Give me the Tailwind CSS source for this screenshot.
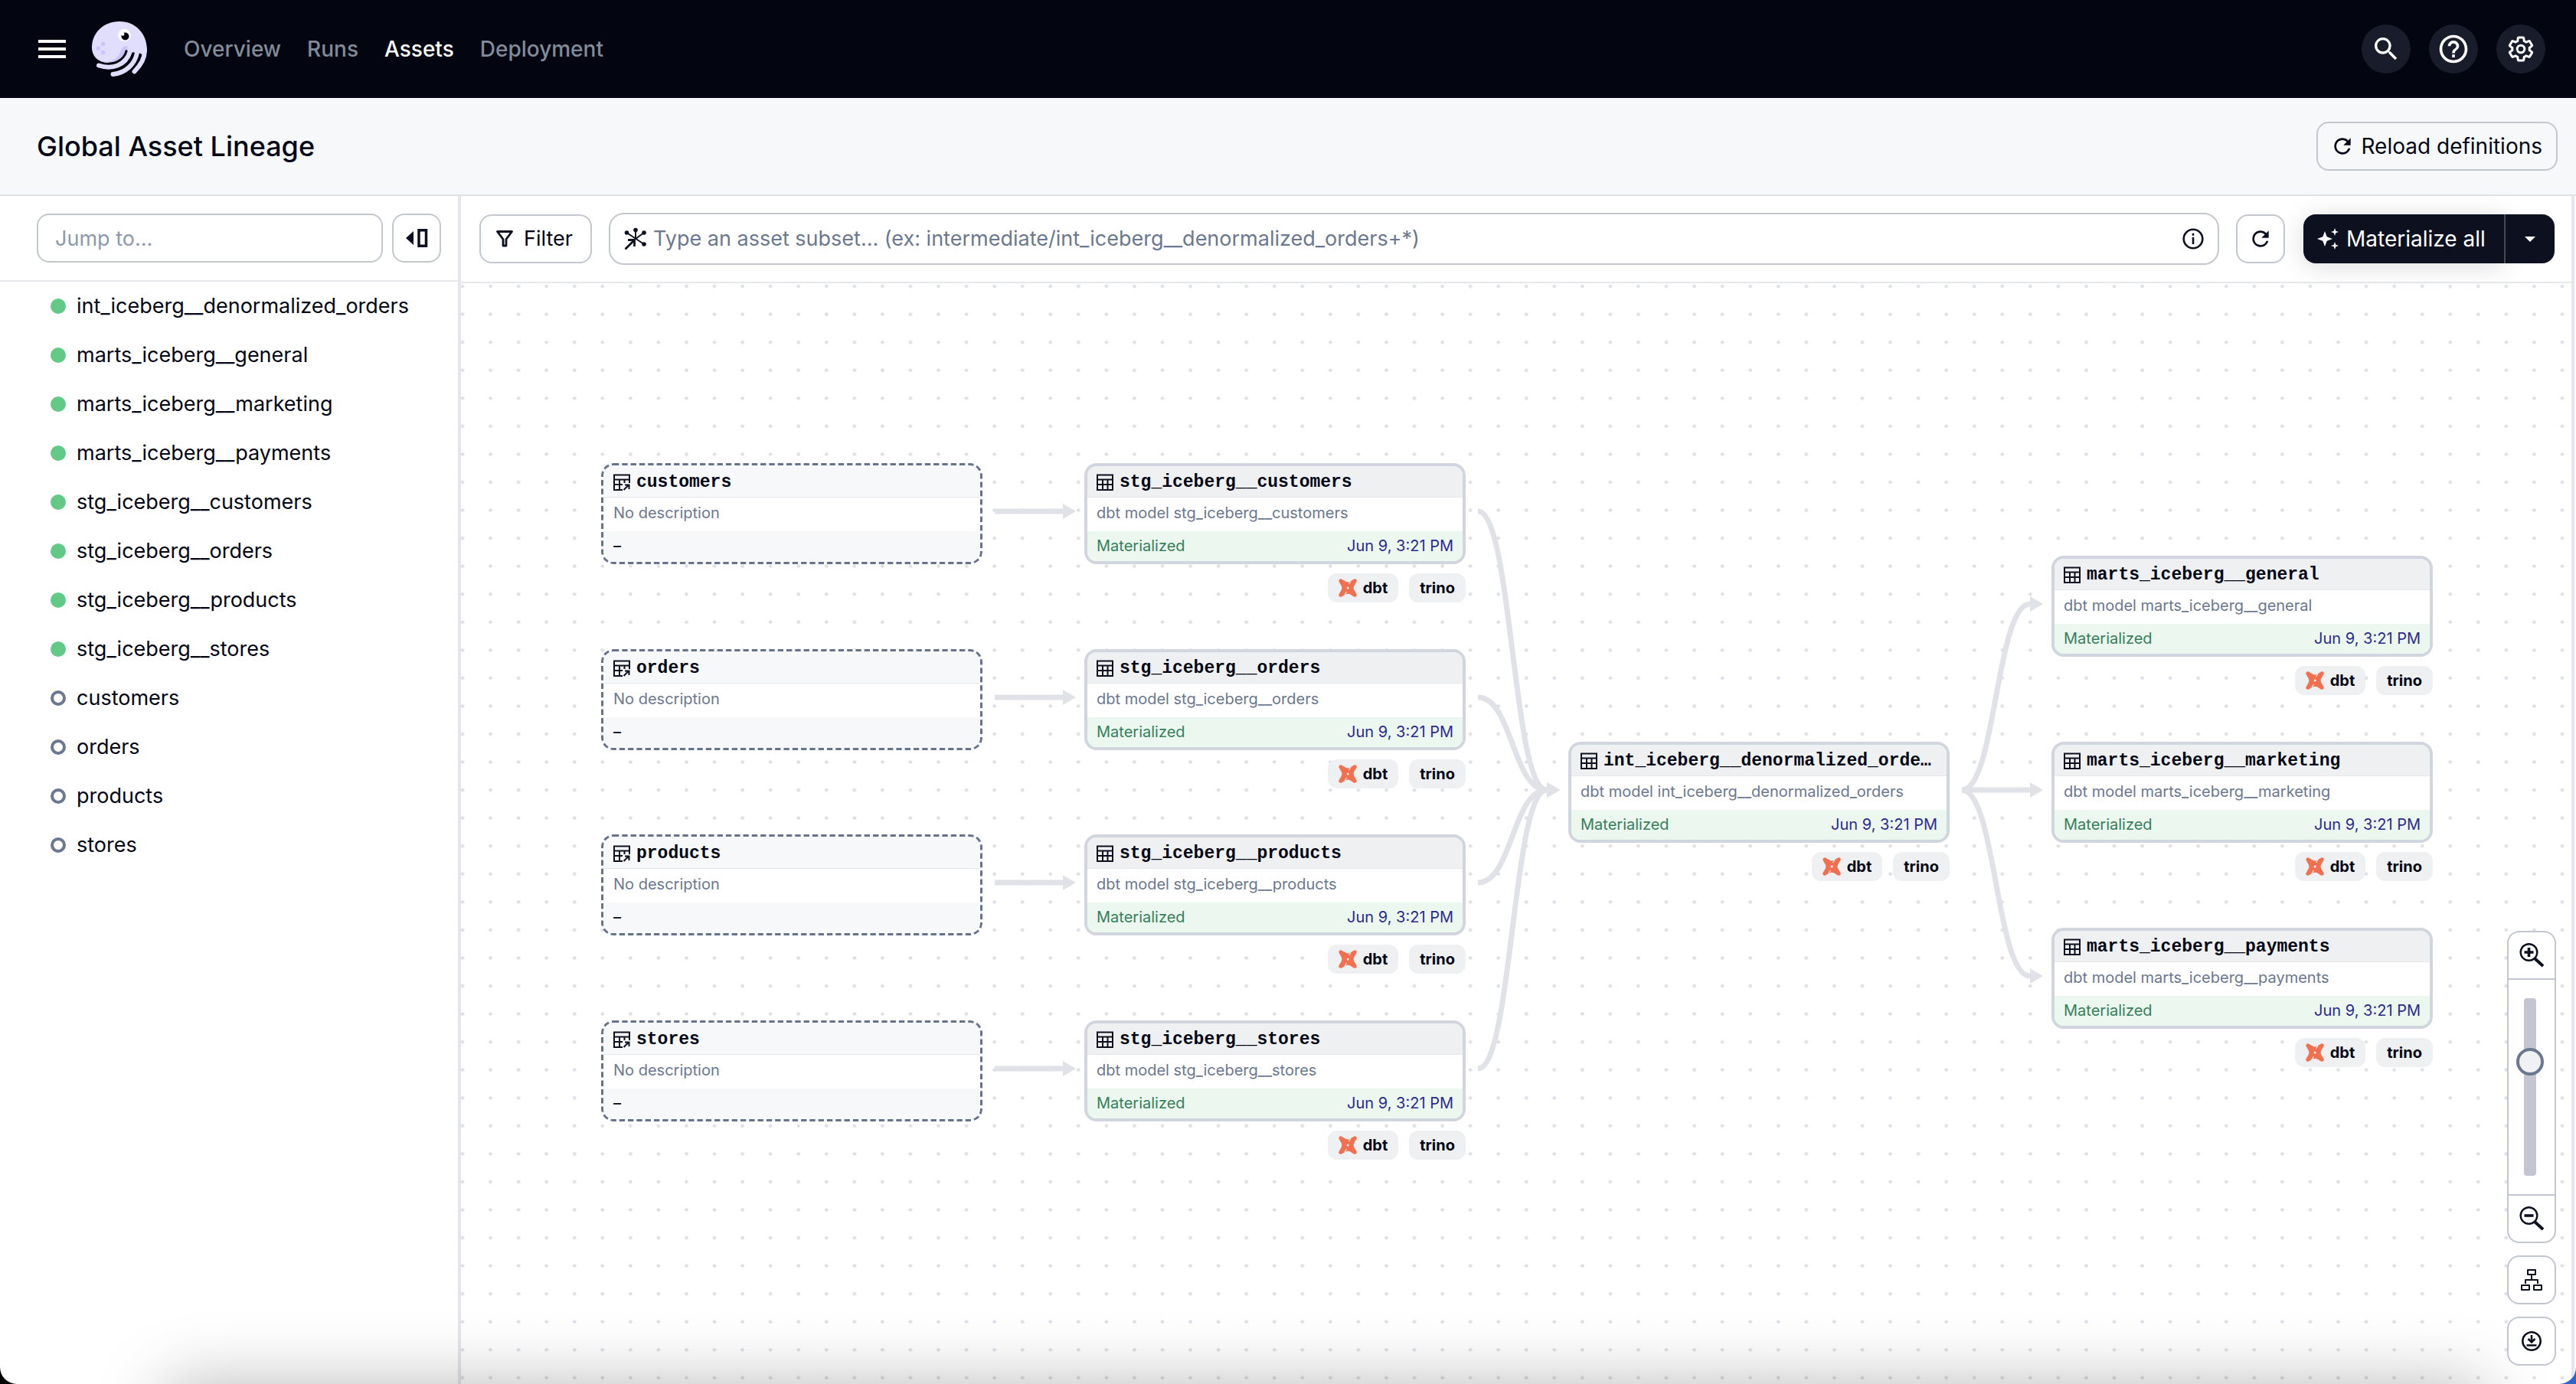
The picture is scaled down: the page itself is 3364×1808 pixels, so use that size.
<!DOCTYPE html>
<html lang="en">
<head>
<meta charset="utf-8">
<title>Global Asset Lineage</title>
<script src="https://cdn.jsdelivr.net/npm/@tailwindcss/browser@4"></script>
</head>
<body class="bg-[linear-gradient(to_right,#000_50%,#2f64c9_50%)] font-['Inter',sans-serif] text-[#030615]">
<div class="relative flex h-screen flex-col overflow-hidden rounded-b-[22px] bg-white">

  <header class="flex h-32 shrink-0 items-center bg-[#030510] pr-10 pl-[50px]">
    <button aria-label="Menu" class="flex w-9 flex-col gap-1.5">
      <span class="h-1 bg-white"></span><span class="h-1 bg-white"></span><span class="h-1 bg-white"></span>
    </button>
    <a href="#" aria-label="Home" class="ml-[34px]">
      <svg class="size-[72px]" viewBox="0 0 72 72" fill="none">
        <path d="M0 34C0 15 15 0 36 0s36 16 36 37c0 4-2 7-4 7-4 0-4-3-8-3s-4 1-6 0c-4-3-6-3-8-1-3 9-12 14-24 14C8 54 0 45 0 34z" fill="#e0defc"/>
        <path d="M8 49c6 5 18 5 25-2 5-5 5-15 11-15 3 0 3 3 2 6-3 10-11 16-24 16-6 0-11-2-14-5z" fill="#c9c5f8"/>
        <path d="M45 39c-2 9-11 16-23 16.500M54.500 42C50 54 42 63 27 63.500M63.500 44c-2 9-8 17-15 23" stroke="#030510" stroke-width="3.400" stroke-linecap="round"/>
        <g stroke="#e0defc" stroke-width="6" stroke-linecap="round">
          <path d="M9 57.500C26 63 44 58 50 39"/>
          <path d="M27.500 69C44 67.500 56 56 59 41"/>
          <path d="M55.500 65.500C64 57 69.500 47 68.800 37"/>
        </g>
        <circle cx="42.500" cy="18" r="8.300" fill="#fff"/>
        <circle cx="43.500" cy="19.500" r="5" fill="#030510"/>
        <circle cx="40.500" cy="16.800" r="2" fill="#fff"/>
        <circle cx="14.500" cy="29.500" r="2.800" fill="#c9c5f8"/><circle cx="8.500" cy="35" r="2.800" fill="#c9c5f8"/><circle cx="14.500" cy="40.500" r="2.800" fill="#c9c5f8"/>
      </svg>
    </a>
    <nav class="ml-12 flex gap-[34px] text-[28px] font-medium text-[#818b99]">
      <a href="#">Overview</a><a href="#">Runs</a><a href="#" class="text-white">Assets</a><a href="#">Deployment</a>
    </nav>
    <div class="ml-auto flex gap-6 text-white">
      <button aria-label="Search" class="grid size-16 place-items-center rounded-full bg-[#191c2a]">
        <svg class="size-10" viewBox="0 0 24 24" fill="currentColor"><path d="M15.500 14h-.79l-.28-.27A6.471 6.471 0 0 0 16 9.500 6.500 6.500 0 1 0 9.500 16c1.610 0 3.090-.59 4.230-1.570l.27.28v.79l5 4.990L20.490 19l-4.990-5zm-6 0C7.010 14 5 11.990 5 9.500S7.010 5 9.500 5 14 7.010 14 9.500 11.990 14 9.500 14z"/></svg>
      </button>
      <button aria-label="Help" class="grid size-16 place-items-center rounded-full bg-[#191c2a]">
        <svg class="size-11" viewBox="0 0 24 24" fill="currentColor"><path d="M11 18h2v-2h-2v2zm1-16C6.480 2 2 6.480 2 12s4.480 10 10 10 10-4.480 10-10S17.520 2 12 2zm0 18c-4.410 0-8-3.590-8-8s3.590-8 8-8 8 3.590 8 8-3.590 8-8 8zm0-14c-2.210 0-4 1.790-4 4h2c0-1.100.9-2 2-2s2 .9 2 2c0 2-3 1.750-3 5h2c0-2.250 3-2.500 3-5 0-2.210-1.790-4-4-4z"/></svg>
      </button>
      <button aria-label="Settings" class="grid size-16 place-items-center rounded-full bg-[#191c2a]">
        <svg class="size-9" viewBox="0 0 24 24" fill="none" stroke="currentColor" stroke-width="2"><path d="M19.430 12.980c.04-.32.07-.64.07-.98s-.03-.66-.07-.98l2.110-1.650c.19-.15.24-.42.12-.64l-2-3.460c-.09-.16-.26-.25-.44-.25-.06 0-.12.010-.17.030l-2.490 1c-.52-.4-1.080-.73-1.690-.98l-.38-2.650C14.460 2.180 14.250 2 14 2h-4c-.25 0-.46.18-.49.42l-.38 2.650c-.61.25-1.170.59-1.690.98l-2.490-1c-.06-.02-.12-.03-.18-.03-.17 0-.34.09-.43.25l-2 3.460c-.13.22-.07.49.12.64l2.110 1.650c-.04.32-.07.65-.07.98s.03.66.07.98l-2.110 1.650c-.19.15-.24.42-.12.64l2 3.460c.09.16.26.25.44.25.06 0 .12-.01.17-.03l2.490-1c.52.4 1.080.73 1.690.98l.38 2.650c.03.24.24.42.49.42h4c.25 0 .46-.18.49-.42l.38-2.650c.61-.25 1.170-.59 1.690-.98l2.490 1c.06.02.12.03.18.03.17 0 .34-.09.43-.25l2-3.460c.12-.22.07-.49-.12-.64l-2.110-1.650z"/><circle cx="12" cy="12" r="3.200"/></svg>
      </button>
    </div>
  </header>

  <div class="flex h-32 shrink-0 items-center justify-between border-b-2 border-[#dfe1e5] bg-[#f6f8fa] pr-6 pl-12">
    <h1 class="text-[36px] leading-[44px] font-medium">Global Asset Lineage</h1>
    <button class="flex h-16 items-center gap-2 rounded-2xl border-2 border-[#c3c8cf] px-4 text-[28px]">
      <svg class="size-8" viewBox="0 0 24 24" fill="currentColor"><path d="M17.650 6.350A7.958 7.958 0 0 0 12 4c-4.420 0-7.990 3.580-7.990 8s3.570 8 7.990 8c3.730 0 6.840-2.550 7.730-6h-2.080A5.990 5.990 0 0 1 12 18c-3.310 0-6-2.690-6-6s2.690-6 6-6c1.660 0 3.140.69 4.220 1.780L13 11h7V4l-2.350 2.350z"/></svg>
      <span class="pr-0.5">Reload definitions</span>
    </button>
  </div>

  <div class="flex min-h-0 flex-1">
    <aside class="w-[602px] shrink-0 border-r-4 border-[#e5e6eb]">
      <div class="flex h-28 items-center gap-3 border-b-2 border-[#e7e8ec] pr-[22px] pl-12">
        <input type="text" aria-label="Jump to" placeholder="Jump to…" class="h-16 min-w-0 flex-1 rounded-2xl border-2 border-[#c3c8cf] px-[22px] text-[27px] placeholder:text-[#8e99ad]">
        <button aria-label="Collapse sidebar" class="grid size-16 place-items-center rounded-2xl border-2 border-[#c3c8cf]">
          <svg class="h-6 w-[30px]" viewBox="0 0 30 24"><path d="M11 3v18L1 12z" fill="#0c101f"/><path d="M18 1.750h9.500v20.500H18z" fill="none" stroke="#0c101f" stroke-width="3.500"/></svg>
        </button>
      </div>
      <ul id="assets" class="text-[27px] leading-[64px]"></ul>
    </aside>

    <main class="mr-0.5 flex min-w-0 flex-1 flex-col border-r-4 border-[#e5e6eb]">
      <div class="flex h-[114px] shrink-0 items-center gap-[22px] border-b-2 border-[#e7e8ec] pr-[22px] pl-6">
        <button class="flex h-16 w-[147px] items-center gap-3.5 rounded-2xl border-2 border-[#c3c8cf] pl-5 text-[27px]">
          <svg class="size-[22px]" viewBox="0 0 22 22" fill="none" stroke="#0c101f" stroke-width="2.800" stroke-linejoin="round"><path d="M1.500 1.500h19L13 11.500v8.500H9v-8.500z"/></svg>
          Filter
        </button>
        <div class="flex h-[68px] min-w-0 flex-1 items-center gap-2 rounded-[20px] border-2 border-[#c3c8cf] pr-4 pl-[18px]">
          <svg class="size-[30px] shrink-0" viewBox="0 0 30 30" fill="#0c101f" stroke="#0c101f"><g stroke="none"><circle cx="15" cy="3.500" r="2.800"/><circle cx="3.500" cy="7" r="2.800"/><circle cx="26" cy="7" r="2.800"/><circle cx="26" cy="22" r="2.800"/></g><path d="M15 3v12M3.500 7 26 22M26 7 15 15" fill="none" stroke-width="2"/><path d="M1.500 28.500 12 18M5 16.500h8.500V25" fill="none" stroke-width="2.800"/></svg>
          <input type="text" aria-label="Asset subset" placeholder="Type an asset subset… (ex: intermediate/int_iceberg__denormalized_orders+*)" class="min-w-0 flex-1 text-[27px] placeholder:text-[#6b7890]">
          <svg class="size-8 shrink-0" viewBox="0 0 32 32" fill="none" stroke="#0c101f" stroke-width="2.600"><circle cx="16" cy="16" r="12.300"/><path d="M16 14v9M16 8.800v3"/></svg>
        </div>
        <button aria-label="Refresh" class="grid size-16 place-items-center rounded-2xl border-2 border-[#c3c8cf]">
          <svg class="size-8" viewBox="0 0 24 24" fill="#0c101f"><path d="M17.650 6.350A7.958 7.958 0 0 0 12 4c-4.420 0-7.990 3.580-7.990 8s3.570 8 7.990 8c3.730 0 6.840-2.550 7.730-6h-2.080A5.990 5.990 0 0 1 12 18c-3.310 0-6-2.690-6-6s2.690-6 6-6c1.660 0 3.140.69 4.220 1.780L13 11h7V4l-2.350 2.350z"/></svg>
        </button>
        <div class="ml-0.5 flex h-16 rounded-2xl text-white">
          <button class="flex w-[262px] items-center gap-2.5 rounded-l-2xl bg-[#0c101f] pl-[18px] text-[28px] whitespace-nowrap shadow-[0_4px_32px_rgba(12,16,31,0.15)]">
            <svg class="size-7 shrink-0" viewBox="0 0 28 28" fill="currentColor"><path d="M10 4l2.700 7.300L20 14l-7.300 2.700L10 24l-2.700-7.300L0 14l7.300-2.700zM23 0l1.300 3.700L28 5l-3.700 1.300L23 10l-1.300-3.700L18 5l3.700-1.300zM23 18l1.300 3.700L28 23l-3.700 1.300L23 28l-1.300-3.700L18 23l3.700-1.300z"/></svg>
            Materialize all
          </button>
          <button aria-label="More materialize options" class="grid w-[66px] place-items-center rounded-r-2xl border-l-2 border-[#454856] bg-[#0c101f]">
            <svg class="h-[7px] w-3.5" viewBox="0 0 14 7" fill="currentColor"><path d="M0 0h14L7 7z"/></svg>
          </button>
        </div>
      </div>

      <div id="graph" class="relative min-h-0 flex-1 overflow-hidden">
        <svg class="absolute inset-0 size-full" fill="none">
          <defs>
            <pattern id="dots" x="-16.280" y="-14.280" width="36.560" height="36.560" patternUnits="userSpaceOnUse"><circle cx="18.280" cy="18.280" r="2.300" fill="#dcdee6"/></pattern>
            <marker id="arrow" markerUnits="userSpaceOnUse" markerWidth="18" markerHeight="20" refX="0" refY="10" orient="auto"><path d="M0 0l17 10L0 20z" fill="#e1e2e7"/></marker>
          </defs>
          <rect width="100%" height="100%" fill="url(#dots)"/>
          <g id="edges" stroke="#e1e2e7" stroke-width="7"></g>
        </svg>

        <div class="absolute right-5 bottom-6 z-20 flex w-16 flex-col gap-4">
          <div class="flex flex-col items-center rounded-2xl border-2 border-[#c3c6d0] bg-white">
            <button aria-label="Zoom in" class="grid h-[62px] w-full place-items-center border-b-2 border-[#c3c6d0]">
              <svg class="size-8" viewBox="0 0 32 32" fill="none" stroke="#0c101f"><circle cx="12.500" cy="12" r="10.800" stroke-width="2.400"/><path d="M20 20l11 10" stroke-width="4"/><path d="M12.500 6v12M6.500 12h12" stroke-width="3.600"/></svg>
            </button>
            <div class="flex h-[280px] items-center justify-center pr-1">
              <input type="range" aria-label="Zoom" min="0" max="100" value="67" class="h-[232px] w-4 appearance-none rounded bg-[#c3c6d0] [direction:rtl] [writing-mode:vertical-lr] [&::-webkit-slider-thumb]:size-9 [&::-webkit-slider-thumb]:appearance-none [&::-webkit-slider-thumb]:rounded-full [&::-webkit-slider-thumb]:border-4 [&::-webkit-slider-thumb]:border-[#6b7890] [&::-webkit-slider-thumb]:bg-[#f0f1f3]">
            </div>
            <button aria-label="Zoom out" class="grid h-[62px] w-full place-items-center border-t-2 border-[#c3c6d0]">
              <svg class="size-8" viewBox="0 0 32 32" fill="none" stroke="#0c101f"><circle cx="12.500" cy="12" r="10.800" stroke-width="2.400"/><path d="M20 20l11 10" stroke-width="4"/><path d="M6.500 12h12" stroke-width="3.600"/></svg>
            </button>
          </div>
          <button aria-label="Change layout" class="grid size-16 place-items-center rounded-2xl border-2 border-[#c3c6d0] bg-white">
            <svg class="size-7" viewBox="0 0 28 28" fill="none" stroke="#0c101f" stroke-width="2" stroke-linejoin="round"><path d="M9 1h10v6H9zM1 21h10v6H1zM17 21h10v6H17zM14 7.500V14M6 19v-5h16v5"/></svg>
          </button>
          <button aria-label="Export" class="grid size-16 place-items-center rounded-2xl border-2 border-[#c3c6d0] bg-white">
            <svg class="size-[26px]" viewBox="0 0 26 26" fill="none" stroke="#0c101f" stroke-width="2.500"><circle cx="13" cy="13" r="11.700"/><path d="M13 5v9M8.500 10l4.500 4.500 4.500-4.500M6.500 18.500h13"/></svg>
          </button>
        </div>
      </div>
    </main>
  </div>

  <div class="pointer-events-none absolute top-full right-[120px] left-[215px] h-40 rounded-[20px] shadow-[0_0_90px_rgba(0,0,0,0.28)]"></div>
</div>

<script>
const W = 498;
const COL = [183, 814, 1446, 2077];
const nodes = [
  { id: 'customers', x: 0, y: 235 }, { id: 'orders', x: 0, y: 478 },
  { id: 'products', x: 0, y: 720 }, { id: 'stores', x: 0, y: 963 },
  { id: 'stg_iceberg__customers', x: 1, y: 235 }, { id: 'stg_iceberg__orders', x: 1, y: 478 },
  { id: 'stg_iceberg__products', x: 1, y: 720 }, { id: 'stg_iceberg__stores', x: 1, y: 963 },
  { id: 'int_iceberg__denormalized_orders', x: 2, y: 599 },
  { id: 'marts_iceberg__general', x: 3, y: 356 }, { id: 'marts_iceberg__marketing', x: 3, y: 599 },
  { id: 'marts_iceberg__payments', x: 3, y: 842 },
];
const links = [[0,4],[1,5],[2,6],[3,7],[4,8],[5,8],[6,8],[7,8],[8,9],[8,10],[8,11]];

const tableIcon = `<svg class="size-[22px] shrink-0" viewBox="0 0 22 22" fill="none" stroke="#0c101f" stroke-width="2"><path d="M1 1.500h20v19.500H1zM1 7.500h20M1 14h20M8 7.500V21M14.500 7.500V21"/></svg>`;
const sourceIcon = `<svg class="size-[22px] shrink-0" viewBox="0 0 22 22" fill="none" stroke="#0c101f" stroke-width="2"><path d="M12 21H1V1.500h20V12M1 7.500h20M1 14h11M8 7.500V21M14.500 7.500V12M13.500 21l6.500-6.500M15 14.500h5.500V20"/></svg>`;
const dbtIcon = `<svg class="size-6" viewBox="0 0 24 24"><path d="M1.200.9C2 .1 3.200.2 4.200.7l5.300 3.100c1.500.9 4 .9 5.500-.2L20 .7c1-.6 2.300-.6 3.200.2.800.9.700 2.100.2 3.100l-3.100 5.200c-.9 1.600-.9 4 0 5.600l3.100 5.200c.5 1 .5 2.200-.2 3.100-.9.800-2.200.8-3.200.3l-5.100-3.100c-1.600-.9-3.900-.9-5.600 0l-5.200 3.100c-1.100.6-2.200.5-3.100-.3-.9-.9-.9-2.100-.3-3.100l3-5.200c.9-1.600.9-4 0-5.600L.7 4C.1 3 .3 1.800 1.200.9z" fill="#f0704f"/><circle cx="12.200" cy="12" r="1.500" fill="#eff0f2"/><path d="M16 3l-2.500 4M8 21l2.500-4" stroke="#eff0f2" stroke-width="1.200"/></svg>`;

const sourceCard = n => `
  <div class="relative h-[132px] overflow-hidden rounded-2xl bg-[#f6f8fa] p-1">
    <div class="flex h-[41px] items-center gap-2 border-b border-[#e5e7eb] px-3 pt-0.5 font-['Liberation_Mono',monospace] text-[23px] font-bold">${sourceIcon}<span>${n.id}</span></div>
    <div class="h-11 bg-white px-3 text-[20px] leading-10 text-[#6b7890]">No description</div>
    <div class="px-3 text-[20px] leading-[38px]">–</div>
    <svg class="absolute inset-0 size-full" fill="none"><rect x="1.500" y="1.500" width="495" height="129" rx="14.500" stroke="#66738b" stroke-width="3" stroke-dasharray="7.300 4"/></svg>
  </div>`;
const modelCard = n => `
  <div class="h-[132px] overflow-hidden rounded-2xl border-4 border-[#d1d5dd] bg-white">
    <div class="flex h-[41px] items-center gap-2 border-b border-[#e5e7eb] bg-[#eff0f2] px-3 pt-0.5 font-['Liberation_Mono',monospace] text-[23px] font-bold">${tableIcon}<span class="truncate">${n.id}</span></div>
    <div class="h-11 px-3 text-[20px] leading-10 text-[#6b7890]">dbt model ${n.id}</div>
    <div class="flex justify-between bg-[#ebf7ef] px-3 text-[20px] leading-[39px]"><span class="text-[#36805a]">Materialized</span><a href="#" class="text-[#2d2a90]">Jun 9, 3:21 PM</a></div>
  </div>
  <div class="mt-3 flex justify-end gap-3.5 text-[20px] leading-[38px] font-bold">
    <span class="flex items-center gap-2 rounded-xl bg-[#eff0f2] px-3.5">${dbtIcon}dbt</span><span class="rounded-xl bg-[#eff0f2] px-3.5">trino</span>
  </div>`;

const graph = document.getElementById('graph');
for (const n of nodes) {
  const el = document.createElement('div');
  el.className = 'absolute w-[498px]';
  el.style.left = COL[n.x] + 'px';
  el.style.top = n.y + 'px';
  el.innerHTML = n.x ? modelCard(n) : sourceCard(n);
  graph.append(el);
}

document.getElementById('edges').innerHTML = links.map(([a, b]) => {
  const s = nodes[a], t = nodes[b];
  const x1 = COL[s.x] + W + 16, y1 = s.y + 63, x2 = COL[t.x] - 28, y2 = t.y + 63, m = (x1 + x2) / 2;
  return `<path d="M${x1} ${y1}C${m} ${y1} ${m} ${y2} ${x2} ${y2}" marker-end="url(#arrow)"/>`;
}).join('');

const order = [8, 9, 10, 11, 4, 5, 6, 7, 0, 1, 2, 3];
document.getElementById('assets').innerHTML = order.map(i => {
  const n = nodes[i];
  const dot = n.x ? 'size-5 rounded-full bg-[#63c986]' : 'size-5 rounded-full border-4 border-[#6b7890]';
  return `<li><a href="#" class="flex items-center gap-3.5 pl-[66px]"><span class="${dot}"></span>${n.id}</a></li>`;
}).join('');
</script>
</body>
</html>
